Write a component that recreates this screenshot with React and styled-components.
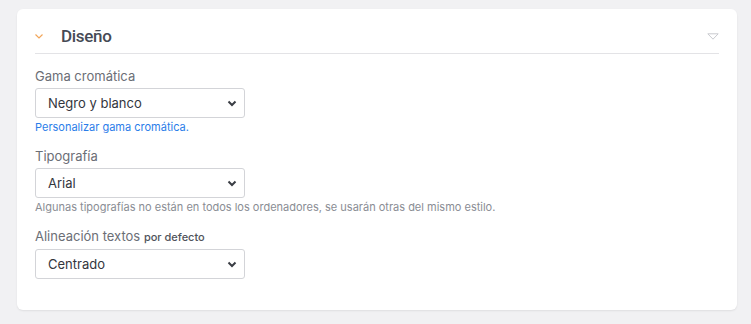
import React from "react";
import styled, { createGlobalStyle } from "styled-components";

const GlobalStyle = createGlobalStyle`
  body {
    margin: 0;
    background: #f1f1f3;
    font-family: Inter, "Liberation Sans", sans-serif;
  }
`;

const Page = styled.div`
  padding: 9px 14px 14px 17px;
`;

const Card = styled.div`
  background: #fff;
  border-radius: 6px;
  box-shadow: 0 1px 2px rgba(0, 0, 0, 0.08);
  padding: 0 18px 31px 18px;
  width: 684px;
`;

const Header = styled.div`
  display: flex;
  align-items: center;
  padding: 14px 0 4px 0;
  border-bottom: 1px solid #e3e3e6;
`;

const Title = styled.h2`
  margin: 0 0 0 18px;
  font-family: Roboto, Inter, sans-serif;
  font-size: 17px;
  letter-spacing: -0.3px;
  line-height: 26px;
  font-weight: 500;
  color: #464a55;
  flex: 1;
`;

const Field = styled.div`
  margin-top: ${({ $top }) => $top}px;
`;

const Label = styled.div`
  font-size: 13px;
  line-height: 18px;
  color: #6b6e76;
  margin-bottom: 3px;
`;

const Small = styled.span`
  font-size: 11px;
  font-weight: 500;
  color: #50535b;
`;

const SelectWrap = styled.div`
  position: relative;
  width: 210px;
`;

const Select = styled.select`
  appearance: none;
  width: 210px;
  height: 30px;
  box-sizing: border-box;
  border: 1px solid #d3d4d8;
  border-radius: 3px;
  background: #fff;
  padding: 0 30px 0 12px;
  font-family: inherit;
  font-size: 13px;
  color: #33363d;
`;

const Caret = styled.svg`
  position: absolute;
  right: 8px;
  top: 12px;
  pointer-events: none;
`;

const Link = styled.a`
  display: block;
  font-size: 11px;
  line-height: 15px;
  color: #2b7de9;
  text-decoration: none;
  margin-top: 2px;
`;

const Help = styled.div`
  font-size: 11px;
  line-height: 15px;
  color: #8a8d94;
  margin-top: 2px;
`;

const Dropdown = ({ value }) => (
  <SelectWrap>
    <Select defaultValue={value}>
      <option>{value}</option>
    </Select>
    <Caret width="10" height="7" viewBox="0 0 10 7">
      <path d="M1.5 1.5 L5 5 L8.5 1.5" fill="none" stroke="#3a3d44" strokeWidth="2" />
    </Caret>
  </SelectWrap>
);

export default function App() {
  return (
    <>
      <GlobalStyle />
      <Page>
        <Card>
          <Header>
            <svg width="8" height="5" viewBox="0 0 8 5">
              <path d="M0.5 0.5 L4 4 L7.5 0.5" fill="none" stroke="#f2a65a" strokeWidth="1.2" />
            </svg>
            <Title>Diseño</Title>
            <svg width="12" height="7" viewBox="0 0 12 7">
              <path d="M0.8 0.8 L11.2 0.8 L6 6.2 Z" fill="none" stroke="#c9cacf" strokeWidth="1" />
            </svg>
          </Header>

          <Field $top={13}>
            <Label>Gama cromática</Label>
            <Dropdown value="Negro y blanco" />
            <Link href="#">Personalizar gama cromática.</Link>
          </Field>

          <Field $top={12}>
            <Label>Tipografía</Label>
            <Dropdown value="Arial" />
            <Help>
              Algunas tipografías no están en todos los ordenadores, se usarán otras del mismo estilo.
            </Help>
          </Field>

          <Field $top={12}>
            <Label>
              Alineación textos <Small>por defecto</Small>
            </Label>
            <Dropdown value="Centrado" />
          </Field>
        </Card>
      </Page>
    </>
  );
}
